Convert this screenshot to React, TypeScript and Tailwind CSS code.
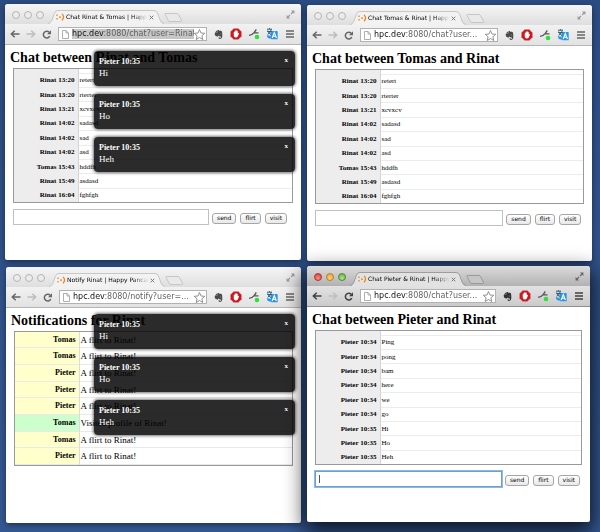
import React from "react";
import clsx from "clsx";
import { SiEvernote } from "react-icons/si";

type Row = { who: string; text: string; visit?: boolean };

const chatRows: Row[] = [
  { who: "Rinat 13:20", text: "retert" },
  { who: "Rinat 13:20", text: "rterter" },
  { who: "Rinat 13:21", text: "xcvxcv" },
  { who: "Rinat 14:02", text: "sadasd" },
  { who: "Rinat 14:02", text: "sad" },
  { who: "Rinat 14:02", text: "asd" },
  { who: "Tomas 15:43", text: "hddfh" },
  { who: "Rinat 15:49", text: "asdasd" },
  { who: "Rinat 16:04", text: "fghfgh" },
];

const pieterRows: Row[] = [
  { who: "Pieter 10:34", text: "Ping" },
  { who: "Pieter 10:34", text: "pong" },
  { who: "Pieter 10:34", text: "bam" },
  { who: "Pieter 10:34", text: "here" },
  { who: "Pieter 10:34", text: "we" },
  { who: "Pieter 10:34", text: "go" },
  { who: "Pieter 10:35", text: "Hi" },
  { who: "Pieter 10:35", text: "Ho" },
  { who: "Pieter 10:35", text: "Heh" },
];

const notifyRows: Row[] = [
  { who: "Tomas", text: "A flirt to Rinat!" },
  { who: "Tomas", text: "A flirt to Rinat!" },
  { who: "Pieter", text: "A flirt to Rinat!" },
  { who: "Pieter", text: "A flirt to Rinat!" },
  { who: "Pieter", text: "A flirt to Rinat!" },
  { who: "Tomas", text: "Visited profile of Rinat!", visit: true },
  { who: "Tomas", text: "A flirt to Rinat!" },
  { who: "Pieter", text: "A flirt to Rinat!" },
];

function TrafficLights({ active }: { active?: boolean }) {
  const colours = active
    ? ["border-[#a8332f] bg-[radial-gradient(circle_at_50%_75%,#ff8a82,#dc3c38)]", "border-[#b5802a] bg-[radial-gradient(circle_at_50%_75%,#ffd878,#e29a2e)]", "border-[#4d8a36] bg-[radial-gradient(circle_at_50%_75%,#b4e48c,#5fae40)]"]
    : ["border-[#b4b4b4] bg-[#ececec]", "border-[#b4b4b4] bg-[#ececec]", "border-[#b4b4b4] bg-[#ececec]"];
  return (
    <div className="flex gap-1 pt-[7px] pl-[7px]">
      {["Close", "Minimise", "Zoom"].map((name, i) => (
        <button key={name} aria-label={name} className={clsx("size-2 rounded-full border", colours[i])} />
      ))}
    </div>
  );
}

function TabStrip({ title, active }: { title: string; active?: boolean }) {
  const fill = active ? "#e2e2e2" : "#f2f2f2";
  const stroke = active ? "#8e8e8e" : "#bcbcbc";
  return (
    <div
      className={clsx(
        "flex h-5 items-start rounded-t-[3px]",
        active ? "bg-linear-to-b from-[#dcdcdc] to-[#b2b2b2]" : "bg-linear-to-b from-[#f6f6f6] to-[#dedede]",
      )}
    >
      <TrafficLights active={active} />
      <div className="relative mt-[6px] ml-1 h-[14px] w-[116px] shrink-0">
        <svg className="absolute inset-0" width="116" height="14" viewBox="0 0 116 14" aria-hidden="true">
          <path d="M0 14 C2.5 13.500 3 12.500 4 10 L6.500 3 Q7.500 .5 10 .5 H106 Q108.500 .5 109.500 3 L112 10 Q113 13.500 116 14 Z" fill={fill} />
          <path d="M0 13.500 C2.500 13 3 12 4 10 L6.500 3 Q7.500 .5 10 .5 H106 Q108.500 .5 109.500 3 L112 10 Q113 13 116 13.500" fill="none" stroke={stroke} strokeWidth=".8" />
        </svg>
        <div className="relative flex h-[14px] items-center pl-2">
          <svg width="9" height="8" viewBox="0 0 9 8" aria-hidden="true">
            <g fill="none" stroke="#ef8418" strokeWidth="1.300">
              <path d="M1 1.500v1.600M1 5v1.600M3 4.100h2M6 .9q3.200 3.100 0 6.300" />
            </g>
          </svg>
          <span className="ml-px w-[82px] overflow-hidden font-['DejaVu_Sans',sans-serif] text-[6px] leading-[10px] whitespace-nowrap text-black mask-[linear-gradient(90deg,#000_80%,transparent)]">
            {title}
          </span>
          <button aria-label="Close tab" className="ml-px">
            <svg width="5" height="5" viewBox="0 0 5 5" aria-hidden="true">
              <path d="M.7.7l3.600 3.600M4.300.7L.7 4.300" stroke="#6d6d6d" strokeWidth=".9" />
            </svg>
          </button>
        </div>
      </div>
      <button aria-label="New tab" className="mt-[9px]">
        <svg width="19" height="9" viewBox="0 0 19 9" aria-hidden="true">
          <path d="M1.500.5H13q1 0 1.500 1L17.500 7.300q.5 1.200-.7 1.200H6q-1.300 0-1.800-1.200L1 1.500Q.7.5 1.500.5Z" fill={active ? "#c6c6c6" : "#e9e9e9"} stroke={stroke} strokeWidth=".8" />
        </svg>
      </button>
      <button aria-label="Full screen" className="mt-[6px] mr-[6px] ml-auto">
        <svg width="9" height="9" viewBox="0 0 9 9" aria-hidden="true">
          <g fill={active ? "#666" : "#9a9a9a"} stroke={active ? "#666" : "#9a9a9a"} strokeWidth=".8">
            <path d="M5 .6h3.400V4zM.6 5v3.400H4z" stroke="none" />
            <path d="M5 4l2-2M4 5L2 7" strokeWidth="1.100" />
          </g>
        </svg>
      </button>
    </div>
  );
}

function ToolIcon({ label, children }: { label: string; children: React.ReactNode }) {
  return (
    <button aria-label={label} className="flex h-3 w-[18px] shrink-0 items-center justify-center">
      {children}
    </button>
  );
}

function Toolbar({ url, active, selected }: { url: string; active?: boolean; selected?: boolean }) {
  const ink = active ? "#404040" : "#666";
  return (
    <div
      className={clsx(
        "flex h-[21px] items-center border-b",
        active ? "border-[#8f8f8f] bg-linear-to-b from-[#e2e2e2] to-[#cbcbcb]" : "border-[#b5b5b5] bg-linear-to-b from-[#f2f2f2] to-[#e2e2e2]",
      )}
    >
      <div className="flex shrink-0 pl-[2px]">
        <button aria-label="Back" className="flex w-4 justify-center">
          <svg width="10" height="8" viewBox="0 0 10 8" aria-hidden="true">
            <path d="M9.500 4H1.500M4.700.7L1.300 4l3.400 3.300" fill="none" stroke={ink} strokeWidth="1.500" />
          </svg>
        </button>
        <button aria-label="Forward" className="flex w-4 justify-center">
          <svg width="10" height="8" viewBox="0 0 10 8" aria-hidden="true">
            <path d="M.5 4h8M5.300.7L8.700 4 5.300 7.300" fill="none" stroke="#bdbdbd" strokeWidth="1.500" />
          </svg>
        </button>
        <button aria-label="Reload" className="flex w-4 justify-center">
          <svg width="10" height="9" viewBox="0 0 10 9" aria-hidden="true">
            <path d="M7.800 6.200A3.400 3.400 0 1 1 7.200 2.200" fill="none" stroke={ink} strokeWidth="1.500" />
            <path d="M9 .2v4H5z" fill={ink} />
          </svg>
        </button>
      </div>
      <div className="ml-[3px] flex h-[14px] min-w-0 flex-1 items-center border border-[#b2b2b2] bg-white pr-px pl-[3px]">
        <svg className="shrink-0" width="7" height="9" viewBox="0 0 7 9" aria-hidden="true">
          <path d="M.5.5h3.600L6.500 3v5.500h-6zM4 .5V3h2.500" fill="#fff" stroke="#9a9a9a" strokeWidth=".8" />
        </svg>
        <div className={clsx("ml-[3px] flex h-[10px] min-w-0 flex-1 items-center", selected && "bg-[#c6c6c6]")}>
          <input
            aria-label="Address"
            defaultValue={url}
            className="w-full min-w-0 bg-[linear-gradient(90deg,#111_32px,#5a5a5a_32px)] bg-clip-text font-['DejaVu_Sans',sans-serif] text-[8px] leading-[10px] text-transparent outline-none"
          />
        </div>
        <button aria-label="Bookmark" className="shrink-0">
          <svg width="11" height="11" viewBox="1 1 22 22" aria-hidden="true">
            <path d="M12 2l3 7 7.500.6-5.700 5 1.800 7.400L12 18l-6.600 4 1.800-7.400-5.700-5L9 9z" fill="#fff" stroke="#8c8c8c" strokeWidth="1.900" />
          </svg>
        </button>
      </div>
      <div className="flex shrink-0 pr-[2px] pl-[2px]">
        <ToolIcon label="Evernote">
          <SiEvernote size={9} color={active ? "#333" : "#4a4a4a"} />
        </ToolIcon>
        <ToolIcon label="AdBlock">
          <svg width="12" height="12" viewBox="0 0 24 24" aria-hidden="true">
            <path d="M7.500 1h9L23 7.500v9L16.500 23h-9L1 16.500v-9z" fill="#d8121b" stroke="#a9a9a9" strokeWidth="1" />
            <path d="M7.500 11.500V8q1-1 2 0V5.500q1-1 2 0V5q1-1 2 0v1q1-1 2 0v5l1.500-1.500q1.500 0 1 1.500l-2.500 6q-1 2-4 2-4 0-4-4z" fill="#fff" />
          </svg>
        </ToolIcon>
        <ToolIcon label="Proxy">
          <svg width="12" height="12" viewBox="0 0 12 12" aria-hidden="true">
            <path d="M1 7.300Q4 7.300 6.300 4.300L8.300 1.500M6 4.800h4.500" fill="none" stroke="#555" strokeWidth="1.300" />
            <circle cx="9" cy="9" r="2.300" fill="#2fe03a" />
          </svg>
        </ToolIcon>
        <ToolIcon label="Translate">
          <svg width="12" height="12" viewBox="0 0 12 12" aria-hidden="true">
            <path d="M4.500 3H11q.7 0 .7.700v7.600H5.200z" fill="#2c95e4" />
            <path d="M1 1.200h5M3.500.2v1M1.200 3.500h4.600M1.600 6.300q3-1.200 3.800-5M1.700 2.500q1 3 3.800 4.500" fill="none" stroke="#2b5f80" strokeWidth="1" />
            <path d="M.8 7.200q.2 3.600 4.600 3.600L4.600 7.800z" fill="#2c95e4" />
            <path d="M6.200 10L8.300 4.500l2.100 5.500M7 8.200h2.600" fill="none" stroke="#fff" strokeWidth="1.100" />
          </svg>
        </ToolIcon>
        <ToolIcon label="Menu">
          <svg width="8" height="8" viewBox="0 0 8 8" aria-hidden="true">
            <path d="M0 1h8M0 4h8M0 7h8" stroke={ink} strokeWidth="1.300" />
          </svg>
        </ToolIcon>
      </div>
    </div>
  );
}

function ChatTable({ rows }: { rows: Row[] }) {
  return (
    <div className="mx-2 border border-[#999]">
      <table className="h-[133px] w-full border-collapse text-[7px] leading-[8px]">
        <tbody>
          <tr className="h-1">
            <td className="w-16 border-r border-[#d4d4d4] bg-[#ededed] p-0" />
            <td className="p-0" />
          </tr>
          {rows.map((row, i) => (
            <tr key={i}>
              <th scope="row" className="w-16 border-r border-[#d4d4d4] bg-[#ededed] p-0 pr-[3px] text-right font-bold">
                {row.who}
              </th>
              <td className="border-t border-[#ececec] p-0 pl-px text-black">{row.text}</td>
            </tr>
          ))}
        </tbody>
      </table>
    </div>
  );
}

function NotifyTable({ rows }: { rows: Row[] }) {
  return (
    <div className="mx-2 border border-[#999]">
      <table className="h-[133px] w-full border-collapse text-[9px] leading-[10px]">
        <tbody>
          {rows.map((row, i) => (
            <tr key={i} className="border-b border-[#e9e9e9]">
              <th
                scope="row"
                className={clsx("w-16 border-r border-[#dcdcdc] p-0 pr-[3px] text-right text-[8px] font-bold", row.visit ? "bg-[#ccffcc]" : "bg-[#ffffcc]")}
              >
                {row.who}
              </th>
              <td className="p-0 pl-px">{row.text}</td>
            </tr>
          ))}
        </tbody>
      </table>
    </div>
  );
}

function Composer({ focused }: { focused?: boolean }) {
  return (
    <form className="mx-2 mt-[6px] flex h-4 items-center" onSubmit={(e) => e.preventDefault()}>
      <div className="relative h-4 w-[70%]">
        <input
          aria-label="Message"
          className={clsx(
            "block h-full w-full border bg-white px-1 text-[8px] outline-none",
            focused ? "border-[#6f9fd0] ring-1 ring-[#8fb8e4]" : "border-[#c0c0c0]",
          )}
        />
        {focused && <span className="absolute top-1 left-1 h-2 w-px bg-[#555]" />}
      </div>
      <div className="ml-[3px] flex gap-1 pt-[2px]">
        {["send", "flirt", "visit"].map((label) => (
          <button
            key={label}
            className="h-[11px] rounded-[3px] border border-[#a6a6a6] bg-linear-to-b from-white to-[#e8e8e8] px-1 font-['DejaVu_Sans',sans-serif] text-[6px] leading-[8px] text-black"
          >
            {label}
          </button>
        ))}
      </div>
    </form>
  );
}

function Toasts() {
  return (
    <div className="absolute top-[6px] right-[6px] flex w-[201px] flex-col gap-2">
      {["Hi", "Ho", "Heh"].map((text) => (
        <div key={text} role="status" className="flex h-[35px] items-start justify-between rounded-[4px] bg-black/83 pt-[5px] pr-[7px] pl-[5px] text-white shadow-[0_0_3px_1px_rgba(0,0,0,0.55)]">
          <div>
            <div className="text-[8px] leading-[12px] font-bold">Pieter 10:35</div>
            <div className="text-[9px] leading-[11px]">{text}</div>
          </div>
          <button aria-label="Dismiss" className="text-[7px] leading-[8px] font-bold">
            x
          </button>
        </div>
      ))}
    </div>
  );
}

type WindowProps = {
  tab: string;
  url: string;
  heading: string;
  active?: boolean;
  selected?: boolean;
  className?: string;
  children: React.ReactNode;
};

function BrowserWindow({ tab, url, heading, active, selected, className, children }: WindowProps) {
  return (
    <section
      className={clsx(
        "isolate rounded-t-[3px] rounded-b-[2px] bg-white",
        active ? "shadow-[0_7px_20px_3px_rgba(0,0,0,0.75)]" : "shadow-[0_2px_6px_rgba(0,0,0,0.45)]",
        className,
      )}
    >
      <TabStrip title={tab} active={active} />
      <Toolbar url={url} active={active} selected={selected} />
      <div className="relative">
        <h1 className="h-[23px] pt-[3px] pl-[5px] text-[14px] leading-5 font-bold whitespace-nowrap">{heading}</h1>
        {children}
      </div>
    </section>
  );
}

export default function App() {
  return (
    <main className="grid min-h-screen grid-cols-[296fr_285fr] items-start gap-x-[6px] bg-linear-to-b from-[#2b4c82] to-[#355892] pr-2 pb-2 pl-[5px] font-['Liberation_Serif',serif] text-black">
      <div className="flex min-w-0 flex-col gap-[7px] pt-1">
        <BrowserWindow tab="Chat Rinat & Tomas | Happy Pancake" url="hpc.dev:8080/chat?user=Rinat" heading="Chat between Rinat and Tomas" selected className="pb-[35px]">
          <ChatTable rows={chatRows} />
          <Composer />
          <Toasts />
        </BrowserWindow>
        <BrowserWindow tab="Notify Rinat | Happy Pancake" url="hpc.dev:8080/notify?user=..." heading="Notifications for Rinat" className="ml-px pb-[57px]">
          <NotifyTable rows={notifyRows} />
          <Toasts />
        </BrowserWindow>
      </div>
      <div className="flex min-w-0 flex-col gap-[5px] pt-[5px]">
        <BrowserWindow tab="Chat Tomas & Rinat | Happy Pancake" url="hpc.dev:8080/chat?user..." heading="Chat between Tomas and Rinat" className="pb-[35px]">
          <ChatTable rows={chatRows} />
          <Composer />
        </BrowserWindow>
        <BrowserWindow tab="Chat Pieter & Rinat | Happy Pancake" url="hpc.dev:8080/chat?user..." heading="Chat between Pieter and Rinat" active className="mr-[2px] pb-[35px]">
          <ChatTable rows={pieterRows} />
          <Composer focused />
        </BrowserWindow>
      </div>
    </main>
  );
}
